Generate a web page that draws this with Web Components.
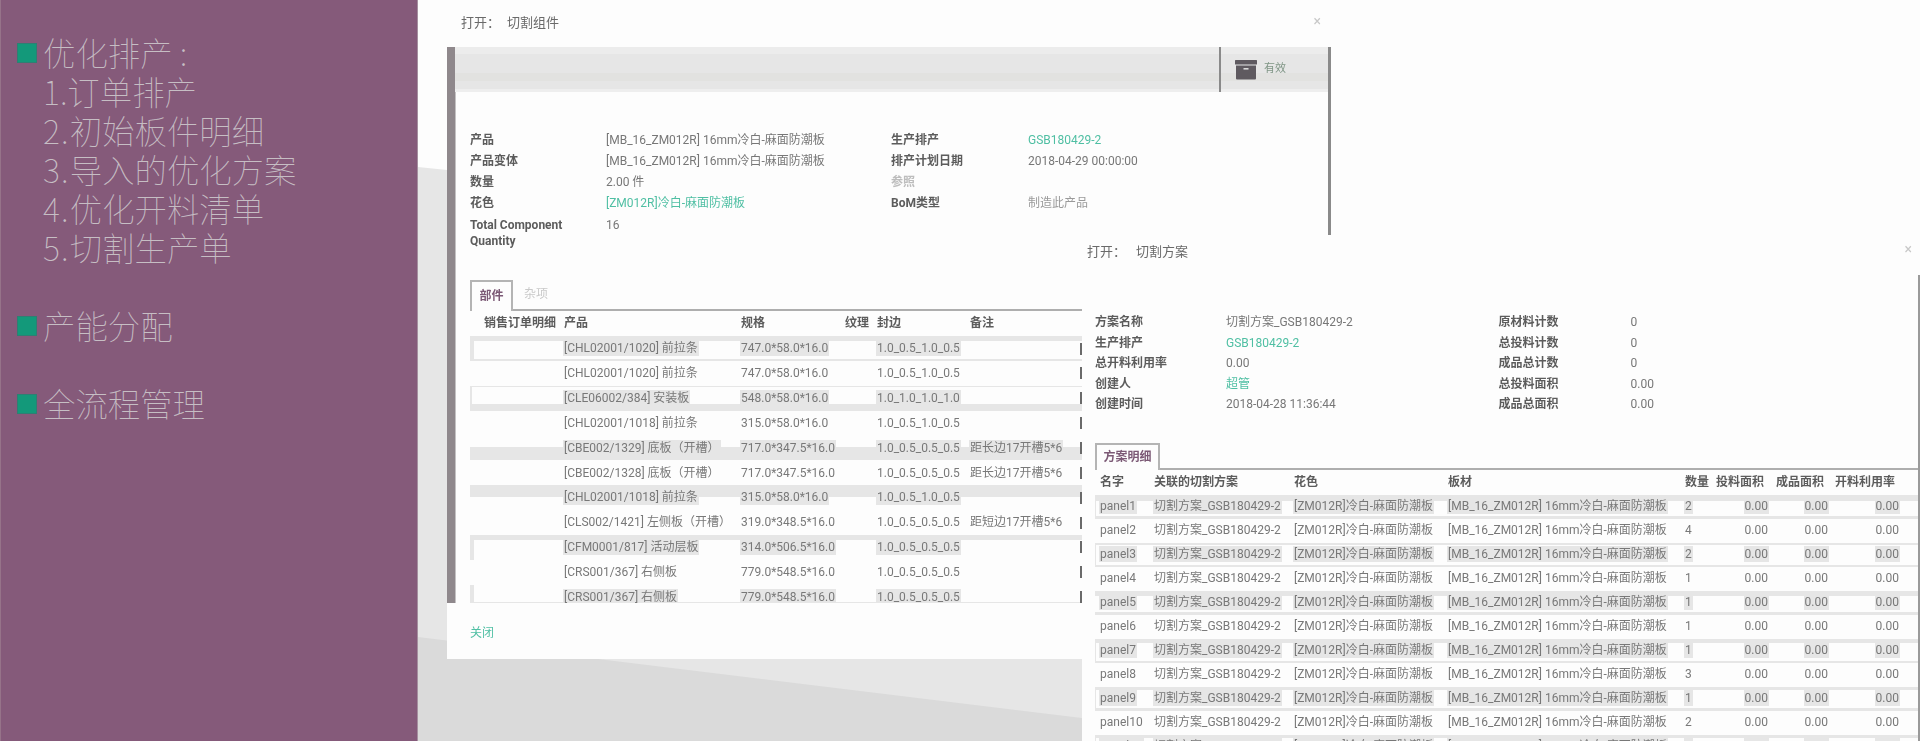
<!DOCTYPE html>
<html lang="zh">
<head>
<meta charset="utf-8">
<title>切割组件</title>
<style>
  html, body { margin: 0; height: 741px; overflow: hidden; background: #fdfdfd; }
  body { display: flex; font-family: Roboto, "Noto Sans CJK SC", sans-serif; }
</style>
</head>
<body>

<slide-side>
  <side-item>优化排产 :<br>1.订单排产<br><span>2.</span>初始板件明细<br><span>3.</span>导入的优化方案<br><span>4.</span>优化开料清单<br><span>5.</span>切割生产单</side-item>
  <side-item>产能分配</side-item>
  <side-item>全流程管理</side-item>
</slide-side>

<slide-desk>
  <work-window id="win1" label="切割组件" style="--x:29px;--y:0;--w:884px;--h:659px;--head:47px;--title-x:14px;--title-gap:7px;--title-pb:0px;--close-r:10px;--close-t:14px">
    <sheet-body>
      <status-bar></status-bar>
      <field-grid style="--cols:136px 285px 137px auto;--rh:21.3px;--pt:37.5px">
        <b>产品</b><span>[MB_16_ZM012R] 16mm冷白-麻面防潮板</span><b>生产排产</b><a>GSB180429-2</a>
        <b>产品变体</b><span>[MB_16_ZM012R] 16mm冷白-麻面防潮板</span><b>排产计划日期</b><span>2018-04-29 00:00:00</span>
        <b>数量</b><span>2.00 件</span><b class="off">参照</b><span></span>
        <b>花色</b><a>[ZM012R]冷白-麻面防潮板</a><b>BoM类型</b><span class="soft">制造此产品</span>
        <b>Total Component Quantity</b><span>16</span><span></span><span></span>
      </field-grid>
      <tab-strip style="--mt:28px;--tab-w:43px;--tab-h:29px" active="部件" other="杂项"></tab-strip>
      <data-table id="parts" style="--cols:89px 177px 104px 32px 93px 115px 2px;--rh:24.85px;--hh:25.5px;--h1:14px"></data-table>
    </sheet-body>
    <window-foot>关闭</window-foot>
  </work-window>

  <work-window id="win2" label="切割方案" style="--x:664px;--y:235px;--w:838px;--h:506px;--head:40px;--title-x:5px;--title-gap:10px;--title-pb:6px;--close-r:8px;--close-t:7px">
    <plan-body>
      <field-grid style="--cols:131px 272.5px 132px auto;--rh:20.5px;--pt:37px">
        <b>方案名称</b><span>切割方案_GSB180429-2</span><b>原材料计数</b><span>0</span>
        <b>生产排产</b><a>GSB180429-2</a><b>总投料计数</b><span>0</span>
        <b>总开料利用率</b><span>0.00</span><b>成品总计数</b><span>0</span>
        <b>创建人</b><a>超管</a><b>总投料面积</b><span>0.00</span>
        <b>创建时间</b><span>2018-04-28 11:36:44</span><b>成品总面积</b><span>0.00</span>
      </field-grid>
      <tab-strip style="--mt:28px;--tab-w:65px;--tab-h:25px" active="方案明细"></tab-strip>
      <data-table id="plans" right="5" style="--cols:54px 140px 154px 237px 33px 60px 60px 71px;--rh:24px;--hh:25px;--h1:5px"></data-table>
    </plan-body>
  </work-window>
</slide-desk>

<script>
class SlideSide extends HTMLElement {
  constructor() {
    super();
    this.attachShadow({mode: "open"});
    this.shadowRoot.innerHTML = `
      <style>
        :host { display: flex; flex-direction: column; gap: 39px; box-sizing: border-box; width: 418px; height: 741px;
                padding: 32px 0 0 17px; background: #855a7a; border-left: 1px solid #967389; border-right: 1px solid #a58f9f; }
      </style>
      <slot></slot>`;
  }
}
customElements.define("slide-side", SlideSide);

class SideItem extends HTMLElement {
  constructor() {
    super();
    this.attachShadow({mode: "open"});
    this.shadowRoot.innerHTML = `
      <style>
        :host { display: grid; grid-template-columns: 26px auto; margin-left: -1px;
                font: 100 32.4px/39px "Noto Sans CJK SC", sans-serif; color: #c6bec4; }
        i { display: block; width: 18px; height: 18px; margin-top: 10.5px; background: #13997a; border: 1px solid #2e7f73; }
        ::slotted(span) { letter-spacing: 1.2px; }
      </style>
      <i></i><div><slot></slot></div>`;
  }
}
customElements.define("side-item", SideItem);

class SlideDesk extends HTMLElement {
  constructor() {
    super();
    this.attachShadow({mode: "open"});
    this.shadowRoot.innerHTML = `
      <style>
        :host { display: block; position: relative; flex: 1; height: 741px; overflow: hidden; }
        svg { position: absolute; inset: 0; }
      </style>
      <svg width="1502" height="741" viewBox="0 0 1502 741">
        <rect width="1502" height="741" fill="#fdfdfd"/>
        <polygon points="0,167 29,170 664,170 664,741 0,741" fill="#e6e6e6"/>
        <polygon points="0,637 664,718 664,741 0,741" fill="#dadada"/>
      </svg>
      <slot></slot>`;
  }
}
customElements.define("slide-desk", SlideDesk);

class WorkWindow extends HTMLElement {
  constructor() {
    super();
    this.attachShadow({mode: "open"});
    this.shadowRoot.innerHTML = `
      <style>
        :host { display: flex; flex-direction: column; position: absolute; box-sizing: border-box;
                left: var(--x); top: var(--y); width: var(--w); height: var(--h); overflow: hidden;
                background: #fdfdfd; filter: blur(.35px);
                font: 12px/16.5px Roboto, "Noto Sans CJK SC", sans-serif; color: #777; }
        header { display: flex; align-items: center; flex: none; box-sizing: border-box; height: var(--head);
                 padding: 0 0 var(--title-pb) var(--title-x); font-size: 13px; color: #6a6a6a; }
        header span:last-of-type { margin-left: var(--title-gap); }
        .x { position: absolute; right: var(--close-r); top: var(--close-t); font-size: 14px; line-height: 14px; color: #c8c8c8; }
      </style>
      <header><span>打开： </span><span id="t"></span></header>
      <div class="x">×</div>
      <slot></slot>`;
  }
  connectedCallback() {
    this.shadowRoot.getElementById("t").textContent = this.getAttribute("label");
  }
}
customElements.define("work-window", WorkWindow);

class SheetBody extends HTMLElement {
  constructor() {
    super();
    this.attachShadow({mode: "open"});
    this.shadowRoot.innerHTML = `
      <style>
        :host { display: block; box-sizing: border-box; flex: none; height: 556px; overflow: hidden;
                padding-left: 15px; border-left: 8px solid #8f888c; border-right: 3px solid #8a8a8a; position: relative;
                box-shadow: inset 1px 0 0 #c4c2c3; }
      </style>
      <slot></slot>`;
  }
}
customElements.define("sheet-body", SheetBody);

class PlanBody extends HTMLElement {
  constructor() {
    super();
    this.attachShadow({mode: "open"});
    this.shadowRoot.innerHTML = `
      <style>
        :host { display: block; flex: 1; overflow: hidden; padding-left: 13px; position: relative; }
        :host::after { content: ""; position: absolute; right: 0; top: 0; bottom: 0; width: 2px; background: #9a9a9a; }
      </style>
      <slot></slot>`;
  }
}
customElements.define("plan-body", PlanBody);

class StatusBar extends HTMLElement {
  constructor() {
    super();
    this.attachShadow({mode: "open"});
    this.shadowRoot.innerHTML = `
      <style>
        :host { display: flex; justify-content: flex-end; height: 45px; margin-left: -15px;
                background: linear-gradient(#ececec 0 7px, #e6e6e6 7px 26px, #e2e2e0 26px 34px, #e6e6e6 34px 42px, #eeeeee 42px); }
        .btn { display: flex; align-items: center; gap: 7px; box-sizing: border-box; width: 109px; padding-left: 14px;
               border-left: 2px solid #8a8a8a; font-size: 11px; color: #7f9585; }
        svg { display: block; }
      </style>
      <div class="btn">
        <svg width="22" height="20" viewBox="0 0 22 20">
          <rect x="0" y="0" width="22" height="4.5" rx=".5" fill="#5f5a60"/>
          <path d="M1 5.5h20v13a1 1 0 0 1-1 1H2a1 1 0 0 1-1-1z" fill="#5f5a60"/>
          <rect x="8.5" y="8" width="5" height="1.6" fill="#d9d9d9"/>
        </svg>
        <span>有效</span>
      </div>`;
  }
}
customElements.define("status-bar", StatusBar);

class FieldGrid extends HTMLElement {
  constructor() {
    super();
    this.attachShadow({mode: "open"});
    this.shadowRoot.innerHTML = `
      <style>
        :host { display: grid; grid-template-columns: var(--cols); grid-auto-rows: minmax(var(--rh), auto); padding-top: var(--pt); }
        ::slotted(*) { padding: 2px 0; }
        ::slotted(b) { color: #5c5c5c; padding-right: 20px; }
        ::slotted(b.off) { color: #bdbdbd; }
        ::slotted(a) { color: #4fbfa3; }
        ::slotted(span.soft) { color: #9a9a9a; }
      </style>
      <slot></slot>`;
  }
}
customElements.define("field-grid", FieldGrid);

class TabStrip extends HTMLElement {
  constructor() {
    super();
    this.attachShadow({mode: "open"});
    this.shadowRoot.innerHTML = `
      <style>
        :host { display: flex; align-items: stretch; margin-top: var(--mt); height: var(--tab-h); border-bottom: 2px solid #aeaeae; }
        div { display: flex; align-items: center; justify-content: center; box-sizing: border-box; }
        .on { width: var(--tab-w); height: calc(var(--tab-h) + 2px); border: 2px solid #b4b4b4; border-bottom: 0;
              background: #fdfdfd; color: #7c5a76; font-weight: bold; }
        .off { margin-left: 11px; color: #c9c9c9; }
      </style>
      <div class="on" id="on"></div><div class="off" id="off"></div>`;
  }
  connectedCallback() {
    this.shadowRoot.getElementById("on").textContent = this.getAttribute("active");
    this.shadowRoot.getElementById("off").textContent = this.getAttribute("other") || "";
  }
}
customElements.define("tab-strip", TabStrip);

class DataTable extends HTMLElement {
  constructor() {
    super();
    this.attachShadow({mode: "open"});
    this.shadowRoot.innerHTML = `
      <style>
        :host { display: block; }
        .h { display: grid; grid-template-columns: var(--cols); height: var(--hh); align-items: center; font-weight: bold; color: #5c5c5c; white-space: nowrap; }
        .h span { padding-left: 5px; }
        .h span:first-child { padding-left: var(--h1); }
        .h span.r { text-align: right; padding: 0 9px 0 0; }
      </style>
      <div class="h" id="h"></div>
      <slot></slot>`;
  }
  setHead(names) {
    var right = +this.getAttribute("right") || 99;
    this.shadowRoot.getElementById("h").innerHTML = names.map(function (n, i) {
      return '<span class="' + (i >= right ? "r" : "") + '">' + n + "</span>";
    }).join("");
  }
}
customElements.define("data-table", DataTable);

class DataRow extends HTMLElement {
  constructor() {
    super();
    this.attachShadow({mode: "open"});
    this.shadowRoot.innerHTML = `
      <style>
        :host { display: grid; grid-template-columns: var(--cols); height: var(--rh); align-items: center; white-space: nowrap; color: #787878; }
        span { padding-left: 5px; min-width: 0; }
        span.r { text-align: right; padding: 0 5px 0 0; }
        :host([hi]) em { background: #e6e6e6; box-shadow: 0 0 0 1px #e6e6e6; }
        em { font-style: normal; }
        span.tick { padding: 0; height: 12px; background: #6a6a6a; }
      </style>
      <div id="r" style="display:contents"></div>`;
  }
  connectedCallback() {
    var cells = this.getAttribute("cells").split("|");
    var right = +this.getAttribute("right") || 99;
    var tick = this.hasAttribute("tick");
    this.shadowRoot.getElementById("r").innerHTML = cells.map(function (c, i) {
      var cls = i >= right ? "r" : "";
      if (tick && i === cells.length - 1) cls = "tick";
      return '<span class="' + cls + '">' + (c ? "<em>" + c + "</em>" : "") + "</span>";
    }).join("");
    var b = this.getAttribute("band");
    if (b) {
      var p = b.split(" ");
      var g = "#e6e6e6";
      this.style.boxShadow = "inset 0 " + p[0] + "px 0 " + g + ",inset -" + p[1] + "px 0 0 " + g +
        ",inset 0 -" + p[2] + "px 0 " + g + ",inset " + p[3] + "px 0 0 " + g;
    }
  }
}
customElements.define("data-row", DataRow);

class WindowFoot extends HTMLElement {
  constructor() {
    super();
    this.attachShadow({mode: "open"});
    this.shadowRoot.innerHTML = `
      <style>
        :host { display: flex; align-items: center; flex: 1; padding: 4px 0 0 23px; color: #4fbfa3; }
      </style>
      <slot></slot>`;
  }
}
customElements.define("window-foot", WindowFoot);

// table contents
var A = "1.0_0.5_1.0_0.5", B = "1.0_0.5_0.5_0.5";
var parts = [
  ["[CHL02001/1020] 前拉条", "747.0*58.0*16.0", A, "", "5 2 2 4"],
  ["[CHL02001/1020] 前拉条", "747.0*58.0*16.0", A, ""],
  ["[CLE06002/384] 安装板", "548.0*58.0*16.0", "1.0_1.0_1.0_1.0", "", "1 1 7 2"],
  ["[CHL02001/1018] 前拉条", "315.0*58.0*16.0", A, ""],
  ["[CBE002/1329] 底板（开槽）", "717.0*347.5*16.0", B, "距长边17开槽5*6", "0 0 13 0"],
  ["[CBE002/1328] 底板（开槽）", "717.0*347.5*16.0", B, "距长边17开槽5*6"],
  ["[CHL02001/1018] 前拉条", "315.0*58.0*16.0", A, "", "12 0 0 0"],
  ["[CLS002/1421] 左侧板（开槽）", "319.0*348.5*16.0", B, "距短边17开槽5*6"],
  ["[CFM0001/817] 活动层板", "314.0*506.5*16.0", B, "", "5 2 0 4"],
  ["[CRS001/367] 右侧板", "779.0*548.5*16.0", B, ""],
  ["[CRS001/367] 右侧板", "779.0*548.5*16.0", B, "", "0 2 7 4"]
];
var t1 = document.getElementById("parts");
t1.setHead(["销售订单明细", "产品", "规格", "纹理", "封边", "备注", ""]);
parts.forEach(function (p, i) {
  var r = document.createElement("data-row");
  r.setAttribute("cells", ["", p[0], p[1], "", p[2], p[3], ""].join("|"));
  r.setAttribute("tick", "");
  if (i % 2 === 0) { r.setAttribute("hi", ""); r.setAttribute("band", p[4]); }
  t1.appendChild(r);
});

var qty = [2, 4, 2, 1, 1, 1, 1, 3, 1, 2, 1];
var bands = ["6 1 3 1", "", "2 1 2 1", "", "5 0 3 0", "", "4 1 2 1", "", "3 1 3 1", "", "3 1 3 1"];
var t2 = document.getElementById("plans");
t2.setHead(["名字", "关联的切割方案", "花色", "板材", "数量", "投料面积", "成品面积", "开料利用率"]);
qty.forEach(function (q, i) {
  var r = document.createElement("data-row");
  r.setAttribute("cells", ["panel" + (i + 1), "切割方案_GSB180429-2", "[ZM012R]冷白-麻面防潮板", "[MB_16_ZM012R] 16mm冷白-麻面防潮板", q, "0.00", "0.00", "0.00"].join("|"));
  r.setAttribute("right", "5");
  if (i % 2 === 0) { r.setAttribute("hi", ""); r.setAttribute("band", bands[i]); }
  t2.appendChild(r);
});
</script>
</body>
</html>
